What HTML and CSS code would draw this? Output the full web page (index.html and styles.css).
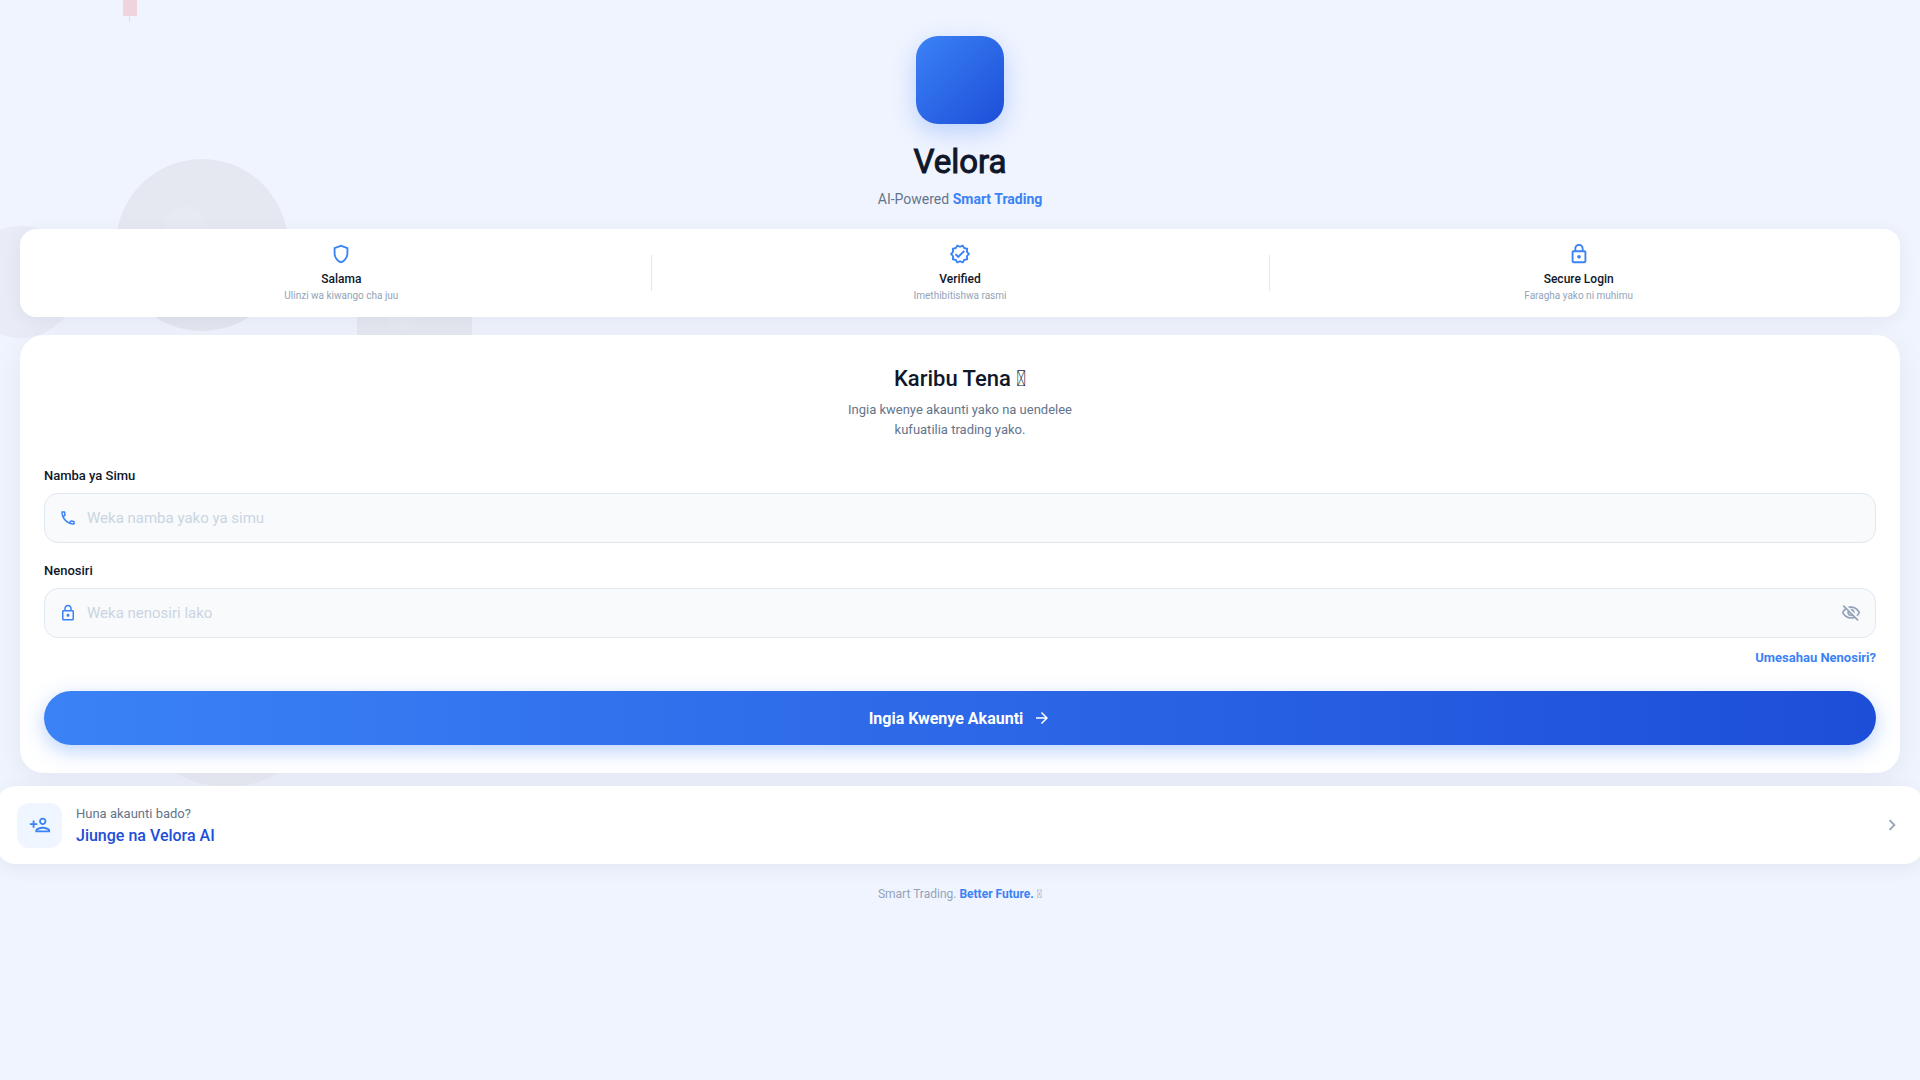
FILE: index.html
```html
<!DOCTYPE html>
<html lang="sw">
<head>
    <meta charset="UTF-8">
    <meta name="viewport" content="width=device-width, initial-scale=1.0">
    <title>Velora - Ingia</title>
    <link rel="stylesheet" href="styles.css">
</head>
<body>
    <!-- Background shapes -->
    <svg class="bg-shapes" width="500" height="800" viewBox="0 0 500 800" aria-hidden="true">
        <g fill="#ef4444" fill-opacity="0.18">
            <rect x="123" y="0" width="14" height="16"/>
            <rect x="129" y="16" width="1" height="6"/>
        </g>
        <circle cx="202" cy="245" r="86" fill="#e5e8f1"/>
        <circle cx="185" cy="228" r="22" fill="#e7eaf2"/>
        <circle cx="21" cy="282" r="56" fill="#e9ebf7"/>
        <rect x="357" y="290" width="115" height="116" fill="#e6e9f1"/>
        <circle cx="403" cy="316" r="15" fill="#e8ebf2"/>
        <circle cx="227" cy="687" r="100" fill="#ebeef6"/>
    </svg>

    <div class="page">
        <header class="brand">
            <div class="logo"></div>
            <h1>Velora</h1>
            <p>AI-Powered <strong>Smart Trading</strong></p>
        </header>

        <section class="trust-card">
            <div class="trust-item">
                <svg width="22" height="22" viewBox="0 0 24 24"><path d="M12 2 4 5v6.09c0 5.05 3.41 9.76 8 10.91 4.59-1.15 8-5.86 8-10.91V5l-8-3zm6 9.09c0 4-2.55 7.7-6 8.83-3.45-1.13-6-4.82-6-8.83v-4.7l6-2.25 6 2.25v4.7z"/></svg>
                <h2>Salama</h2>
                <p>Ulinzi wa kiwango cha juu</p>
            </div>
            <div class="trust-item">
                <svg width="22" height="22" viewBox="0 0 24 24"><path d="m23 12-2.44-2.78.34-3.68-3.61-.82-1.89-3.18L12 3 8.6 1.54 6.71 4.72l-3.61.81.34 3.68L1 12l2.44 2.78-.34 3.69 3.61.82 1.89 3.18L12 21l3.4 1.46 1.89-3.18 3.61-.82-.34-3.68L23 12zm-4.51 2.11.26 2.79-2.74.62-1.43 2.41L12 18.82l-2.58 1.11-1.43-2.41-2.74-.62.26-2.8L3.66 12l1.85-2.12-.26-2.78 2.74-.61 1.43-2.41L12 5.18l2.58-1.11 1.43 2.41 2.74.62-.26 2.79L20.34 12l-1.85 2.11z"/><path d="m10.09 13.75-2.32-2.33-1.48 1.49 3.8 3.81 7.34-7.36-1.48-1.49z"/></svg>
                <h2>Verified</h2>
                <p>Imethibitishwa rasmi</p>
            </div>
            <div class="trust-item">
                <svg width="22" height="22" viewBox="0 0 24 24"><path d="M18 8h-1V6c0-2.76-2.24-5-5-5S7 3.24 7 6v2H6c-1.1 0-2 .9-2 2v10c0 1.1.9 2 2 2h12c1.1 0 2-.9 2-2V10c0-1.1-.9-2-2-2zM9 6c0-1.66 1.34-3 3-3s3 1.34 3 3v2H9V6zm9 14H6V10h12v10zm-6-3c1.1 0 2-.9 2-2s-.9-2-2-2-2 .9-2 2 .9 2 2 2z"/></svg>
                <h2>Secure Login</h2>
                <p>Faragha yako ni muhimu</p>
            </div>
        </section>

        <main class="login-card">
            <h2>Karibu Tena &#xE000;</h2>
            <p class="intro">Ingia kwenye akaunti yako na uendelee<br>kufuatilia trading yako.</p>

            <form>
                <label for="simu">Namba ya Simu</label>
                <div class="field">
                    <svg width="18" height="18" viewBox="0 0 24 24"><path d="M6.54 5c.06.89.21 1.76.45 2.59l-1.2 1.2c-.41-1.2-.67-2.47-.76-3.79h1.51m9.86 12.02c.85.24 1.72.39 2.6.45v1.49c-1.32-.09-2.59-.35-3.8-.75l1.2-1.19M7.5 3H4c-.55 0-1 .45-1 1 0 9.39 7.61 17 17 17 .55 0 1-.45 1-1v-3.49c0-.55-.45-1-1-1-1.24 0-2.45-.2-3.57-.57-.1-.04-.21-.05-.31-.05-.26 0-.51.1-.71.29l-2.2 2.2c-2.83-1.45-5.15-3.76-6.59-6.59l2.2-2.2c.28-.28.36-.67.25-1.02C8.7 6.45 8.5 5.25 8.5 4c0-.55-.45-1-1-1z"/></svg>
                    <input type="tel" id="simu" name="simu" placeholder="Weka namba yako ya simu">
                </div>

                <label for="nenosiri">Nenosiri</label>
                <div class="field">
                    <svg width="18" height="18" viewBox="0 0 24 24"><path d="M18 8h-1V6c0-2.76-2.24-5-5-5S7 3.24 7 6v2H6c-1.1 0-2 .9-2 2v10c0 1.1.9 2 2 2h12c1.1 0 2-.9 2-2V10c0-1.1-.9-2-2-2zM9 6c0-1.66 1.34-3 3-3s3 1.34 3 3v2H9V6zm9 14H6V10h12v10zm-6-3c1.1 0 2-.9 2-2s-.9-2-2-2-2 .9-2 2 .9 2 2 2z"/></svg>
                    <input type="password" id="nenosiri" name="nenosiri" placeholder="Weka nenosiri lako">
                    <button type="button" class="toggle-btn" aria-label="Onyesha nenosiri">
                        <svg width="20" height="20" viewBox="0 0 24 24"><path d="M12 6c3.79 0 7.17 2.13 8.82 5.5-.59 1.22-1.42 2.27-2.41 3.12l1.41 1.41c1.39-1.23 2.49-2.77 3.18-4.53C21.27 7.11 17 4 12 4c-1.27 0-2.49.2-3.64.57l1.65 1.65C10.66 6.09 11.32 6 12 6zm-1.07 1.14L13 9.21c.57.25 1.03.71 1.28 1.28l2.07 2.07c.08-.34.14-.7.14-1.07C16.5 9.01 14.48 7 12 7c-.37 0-.72.05-1.07.14zM2.01 3.87l2.68 2.68C3.06 7.83 1.77 9.53 1 11.5 2.73 15.89 7 19 12 19c1.52 0 2.98-.29 4.32-.82l3.42 3.42 1.41-1.41L3.42 2.45 2.01 3.87zm7.5 7.5 2.61 2.61c-.04.01-.08.02-.12.02-1.38 0-2.5-1.12-2.5-2.5 0-.05.01-.08.01-.13zm-3.4-3.4 1.75 1.75c-.23.55-.36 1.15-.36 1.78 0 2.48 2.02 4.5 4.5 4.5.63 0 1.23-.13 1.77-.36l.98.98c-.88.24-1.8.38-2.75.38-3.79 0-7.17-2.13-8.82-5.5.7-1.43 1.72-2.61 2.93-3.53z"/></svg>
                    </button>
                </div>

                <a href="#" class="forgot">Umesahau Nenosiri?</a>

                <button type="submit" class="submit-btn">
                    Ingia Kwenye Akaunti
                    <svg width="18" height="18" viewBox="0 0 24 24"><path d="m12 4-1.41 1.41L16.17 11H4v2h12.17l-5.58 5.59L12 20l8-8z"/></svg>
                </button>
            </form>
        </main>

        <a href="#" class="register-card">
            <span class="register-icon">
                <svg width="22" height="22" viewBox="0 0 24 24"><path d="M15 12c2.21 0 4-1.79 4-4s-1.79-4-4-4-4 1.79-4 4 1.79 4 4 4zm0-6c1.1 0 2 .9 2 2s-.9 2-2 2-2-.9-2-2 .9-2 2-2zm0 8c-2.67 0-8 1.34-8 4v2h16v-2c0-2.66-5.33-4-8-4zm-6 4c.22-.72 3.31-2 6-2 2.7 0 5.8 1.29 6 2H9zm-3-3v-3h3v-2H6V7H4v3H1v2h3v3z"/></svg>
            </span>
            <span class="register-text">
                <span>Huna akaunti bado?</span>
                <strong>Jiunge na Velora AI</strong>
            </span>
            <svg class="chevron" width="22" height="22" viewBox="0 0 24 24"><path d="M10 6 8.59 7.41 13.17 12l-4.58 4.59L10 18l6-6z"/></svg>
        </a>

        <footer>Smart Trading. <strong>Better Future.</strong> &#xE000;</footer>
    </div>
</body>
</html>
```
FILE: styles.css
```css
:root {
    --blue: #3b82f6;
    --dark-blue: #1d4ed8;
    --bg: #f0f4ff;
    --text: #0f172a;
    --muted: #64748b;
    --light: #94a3b8;
    --border: #e2e8f0;
}

* {
    margin: 0;
    padding: 0;
    box-sizing: border-box;
    font-family: Roboto, sans-serif;
}

body {
    background: var(--bg);
    color: var(--text);
    min-height: 100vh;
    overflow-x: hidden;
}

svg {
    fill: var(--blue);
    flex-shrink: 0;
}

a {
    text-decoration: none;
}

.bg-shapes {
    position: absolute;
    top: 0;
    left: 0;
    z-index: -1;
}

.page {
    padding: 36px 20px;
}

.brand {
    text-align: center;
    margin-bottom: 20px;
}

.logo {
    width: 88px;
    height: 88px;
    margin: 0 auto 18px;
    border-radius: 22px;
    background: linear-gradient(135deg, var(--blue), var(--dark-blue));
    box-shadow: 0 8px 24px rgba(59, 130, 246, 0.3);
}

.brand h1 {
    font-size: 33px;
    line-height: 40px;
    font-weight: 400;
    -webkit-text-stroke: 1px var(--text);
    margin-bottom: 8px;
}

.brand p {
    font-size: 14px;
    line-height: 19px;
    color: var(--muted);
}

.brand strong, footer strong {
    color: var(--blue);
    font-weight: 700;
}

/* Trust row */
.trust-card {
    display: flex;
    background: #fff;
    border-radius: 16px;
    padding: 14px 12px;
    margin-bottom: 18px;
    box-shadow: 0 4px 20px rgba(15, 23, 42, 0.06);
}

.trust-item {
    flex: 1;
    height: 60px;
    display: flex;
    flex-direction: column;
    align-items: center;
    position: relative;
}

.trust-item + .trust-item::before {
    content: "";
    position: absolute;
    left: 0;
    top: 12px;
    width: 1px;
    height: 36px;
    background: var(--border);
}

.trust-item h2 {
    font-size: 12px;
    line-height: 16px;
    font-weight: 500;
    margin: 6px 0 2px;
}

.trust-item p {
    font-size: 10px;
    line-height: 14px;
    color: var(--light);
}

/* Login form */
.login-card {
    background: #fff;
    border-radius: 24px;
    padding: 28px 24px;
    margin-bottom: 13px;
    box-shadow: 0 8px 32px rgba(15, 23, 42, 0.06);
}

.login-card h2 {
    font-size: 22px;
    line-height: 32px;
    font-weight: 500;
    text-align: center;
    margin-bottom: 5px;
}

.intro {
    font-size: 13px;
    line-height: 20px;
    color: var(--muted);
    text-align: center;
    margin-bottom: 27px;
}

label {
    display: block;
    font-size: 13px;
    line-height: 18px;
    font-weight: 500;
    margin-bottom: 8px;
}

.field {
    display: flex;
    align-items: center;
    gap: 10px;
    height: 50px;
    padding: 0 14px;
    margin-bottom: 19px;
    background: #f8fafc;
    border: 1px solid var(--border);
    border-radius: 14px;
}

.field input {
    flex: 1;
    min-width: 0;
    border: none;
    outline: none;
    background: none;
    font-size: 15px;
    line-height: 20px;
    color: var(--text);
}

.field input::placeholder {
    color: #cbd5e1;
}

.toggle-btn {
    display: flex;
    border: none;
    background: none;
    cursor: pointer;
}

.toggle-btn svg, .chevron {
    fill: var(--light);
}

.forgot {
    display: block;
    width: fit-content;
    margin: -8px 0 24px auto;
    font-size: 13px;
    line-height: 18px;
    font-weight: 700;
    color: var(--blue);
}

.submit-btn {
    display: flex;
    align-items: center;
    justify-content: center;
    gap: 10px;
    width: 100%;
    height: 54px;
    border: none;
    border-radius: 27px;
    background: linear-gradient(90deg, var(--blue), var(--dark-blue));
    box-shadow: 0 6px 20px rgba(59, 130, 246, 0.35);
    color: #fff;
    font-size: 16px;
    font-weight: 700;
    cursor: pointer;
}

.submit-btn svg {
    fill: #fff;
}

/* Register link */
.register-card {
    display: flex;
    align-items: center;
    gap: 14px;
    min-height: 78px;
    margin: 0 -24px 20px;
    padding: 16px 21px;
    background: #fff;
    border-radius: 20px;
    box-shadow: 0 4px 20px rgba(15, 23, 42, 0.06);
}

.register-icon {
    display: flex;
    align-items: center;
    justify-content: center;
    width: 45px;
    height: 45px;
    border-radius: 12px;
    background: #eff6ff;
}

.register-text {
    flex: 1;
    display: flex;
    flex-direction: column;
    gap: 4px;
    font-size: 13px;
    line-height: 18px;
    color: var(--muted);
}

.register-text strong {
    font-size: 16px;
    font-weight: 500;
    color: var(--dark-blue);
}

footer {
    text-align: center;
    font-size: 12px;
    line-height: 20px;
    color: var(--light);
}
```
